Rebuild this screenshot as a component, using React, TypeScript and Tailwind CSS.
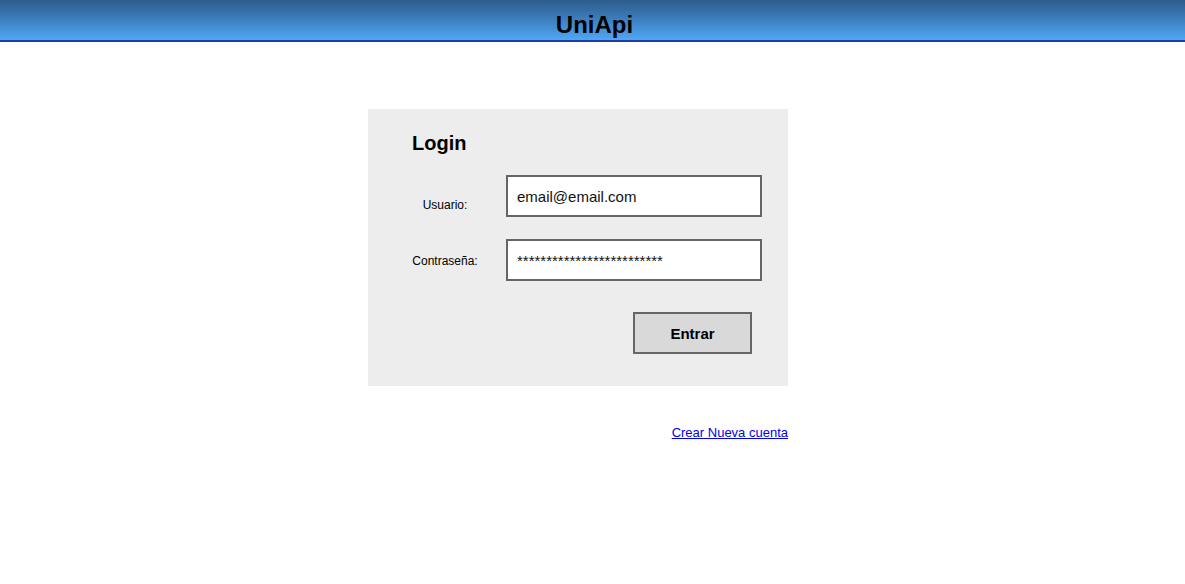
export default function App() {
  return (
    <div className="min-h-[584px] bg-white font-['Liberation_Sans',Arial,sans-serif] text-black">
      {/* cabecera */}
      <header className="h-[42px] border-b-2 border-[#1e3f9e] bg-gradient-to-b from-[#2c5c8b] to-[#50a6f7] flex items-end justify-center">
        <h1 className="text-[24px] font-bold leading-[28px] mb-[1px] ml-[4px]">UniApi</h1>
      </header>

      <div className="ml-[368px] mt-[67px] w-[420px]">
        {/* tarjeta login */}
        <div className="bg-[#ededed] pt-[20px] pb-[32px] pl-[32px] pr-[26px]">
          <h2 className="ml-[12px] text-[20px] font-bold leading-[28px]">Login</h2>

          <div className="mt-[18px] flex items-start">
            <label className="w-[90px] mt-[23px] text-center text-[12px] leading-[14px]">Usuario:</label>
            <input
              type="text"
              defaultValue="email@email.com"
              className="ml-[16px] h-[42px] w-[256px] border-2 border-[#666] bg-white px-[9px] text-[15px] text-[#111] outline-none"
            />
          </div>

          <div className="mt-[22px] flex items-start">
            <label className="w-[90px] mt-[15px] text-center text-[12px] leading-[14px]">Contraseña:</label>
            <input
              type="text"
              defaultValue="*************************"
              className="ml-[16px] h-[42px] w-[256px] border-2 border-[#666] bg-white px-[9px] text-[15px] text-[#111] outline-none"
            />
          </div>

          <div className="mt-[31px] flex justify-end pr-[10px]">
            <button className="h-[42px] w-[119px] border-2 border-[#666] bg-[#d9d9d9] pt-[2px] text-[15px] font-bold">
              Entrar
            </button>
          </div>
        </div>

        <div className="mt-[39px] flex justify-end">
          <a href="#" className="text-[13px] leading-[16px] text-[#0000ee] underline">
            Crear Nueva cuenta
          </a>
        </div>
      </div>
    </div>
  );
}
